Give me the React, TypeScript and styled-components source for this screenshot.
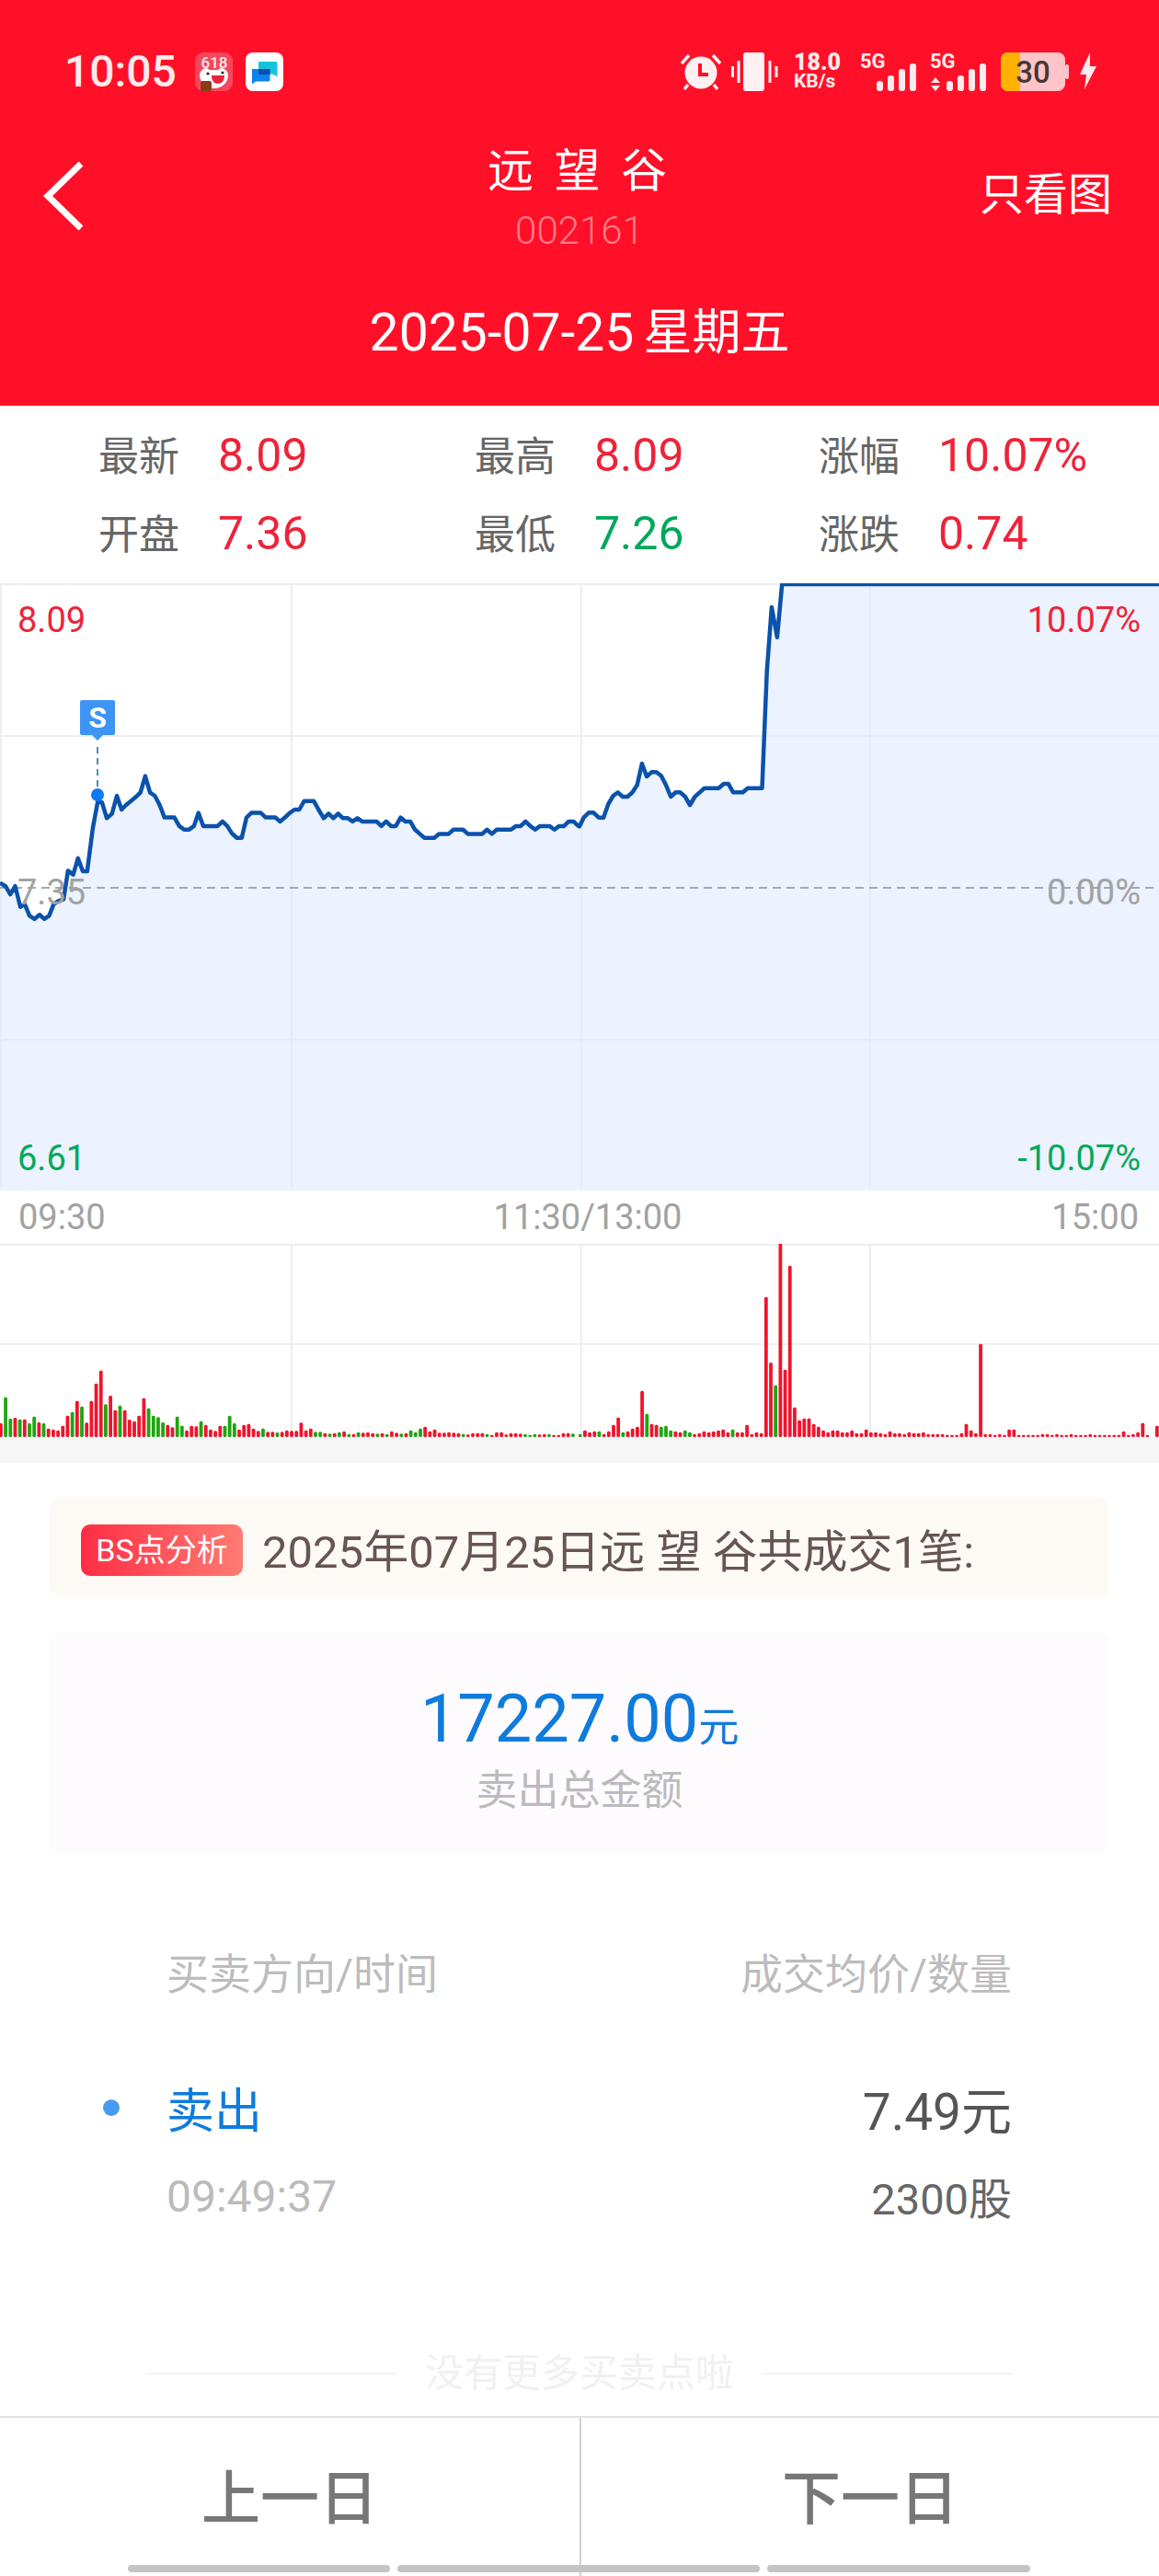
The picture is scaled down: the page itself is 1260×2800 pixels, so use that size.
import styled, { createGlobalStyle } from "styled-components";

const RED = "#ee2339";
const GREEN = "#00a85a";
const BLUE = "#0f7bdc";

// price line, read off the reference: [x, y] in chart pixels
const morning = [
  [0, 1455], [15, 1465], [28, 1490], [41, 1465], [55, 1528], [67, 1520], [80, 1555], [93, 1565], [107, 1552], [120, 1565],
  [133, 1555], [145, 1520], [158, 1510], [172, 1505], [184, 1418], [198, 1430], [211, 1380], [224, 1420], [236, 1420], [251, 1290],
  [264, 1210], [276, 1210], [289, 1258], [303, 1245], [316, 1190], [329, 1232], [341, 1218], [355, 1205], [368, 1193], [380, 1180],
  [393, 1130], [406, 1180], [419, 1190], [432, 1218], [445, 1256], [458, 1256], [472, 1256], [485, 1282], [498, 1293], [511, 1293],
  [525, 1282], [537, 1242], [550, 1282], [563, 1282], [576, 1282], [589, 1282], [602, 1268], [615, 1282], [628, 1305], [641, 1318],
  [654, 1318], [667, 1256], [680, 1242], [693, 1242], [706, 1242], [719, 1256], [732, 1256], [745, 1256], [758, 1268], [771, 1256],
  [784, 1242], [797, 1232], [810, 1232], [823, 1206], [836, 1206], [849, 1206], [862, 1232], [876, 1258], [889, 1244], [902, 1258],
  [915, 1244], [928, 1258], [941, 1258], [954, 1268], [967, 1258], [980, 1268], [993, 1268], [1006, 1268], [1019, 1268], [1032, 1282],
  [1045, 1268], [1058, 1282], [1071, 1282], [1084, 1256], [1097, 1268], [1110, 1268], [1123, 1293], [1136, 1306], [1149, 1318], [1162, 1318],
  [1175, 1318], [1188, 1306], [1201, 1306], [1214, 1306], [1227, 1293], [1240, 1293], [1253, 1293], [1266, 1306], [1279, 1306], [1292, 1306],
  [1305, 1306], [1318, 1293], [1331, 1306], [1344, 1293], [1357, 1293], [1370, 1293], [1383, 1293], [1396, 1282], [1409, 1282], [1422, 1268],
  [1435, 1282], [1448, 1293], [1461, 1282], [1474, 1282], [1487, 1282], [1500, 1293], [1513, 1282], [1526, 1282], [1539, 1268], [1552, 1268],
  [1565, 1282],
].map(([x, y]) => [x / 2.489, 440 + y / 2.8 - 634]);

const afternoon = [
  [0, 835], [12, 805], [25, 790], [38, 790], [52, 806], [65, 806], [78, 762], [91, 735], [104, 724], [117, 738],
  [130, 738], [143, 724], [156, 700], [169, 630], [182, 672], [195, 658], [208, 658], [221, 670], [234, 700], [247, 738],
  [260, 724], [273, 724], [286, 738], [299, 765], [312, 738], [325, 724], [338, 710], [351, 710], [364, 710], [377, 710],
  [390, 696], [403, 696], [416, 724], [429, 724], [442, 724], [455, 710], [468, 710], [481, 710], [494, 710], [507, 330],
  [520, 120], [535, 218], [548, 45], [1568, 45],
].map(([x, y]) => [630 + x / 2.489, 620 + y / 3 - 634]);

const pricePoints = [...morning, ...afternoon];
const priceLine = pricePoints.map(([x, y]) => `${x.toFixed(1)},${y.toFixed(1)}`).join(" ");
const priceArea = `0,660 ${priceLine} 1260,660`;

// volume bars: bar top in reference units, negative = green
const volumeAm = [
  770, -685, -755, 752, -757, 757, -770, -748, 767, -770, 787, 790, 793, 778, 745, -733, 697, -715, 768, 697,
  640, 598, -708, 680, 727, -712, 727, 758, 763, 745, 688, -721, -745, -750, -767, 775, 783, -748, -778, 793,
  778, 780, -763, 775, 790, 795, 778, -778, -745, -770, 790, 775, 772, 787, 795, -787, 798, 798, -800, 798,
  793, 795, 795, 768, 793, 787, -798, -798, 802, -804, 802, -799, 796, -805, 805, -799, 801, 799, 802, -804,
  802, -805, 796, 801, -804, 802, -793, -799, -787, 781, 796, 790, 801, 801, 799, 801, 802, -805, 807, 802,
  802, 802, -805, 808, 799, 799, 807, 802, 802, 804, -805, -808, -805, 807, 805, -805, 808, 808, 802, 802, -804,
];
const volumePm = [
  -805, 793, 799, 796, -796, 805, 796, 775, 751, -799, 796, 787, 781, 664, -739, 772, 775, -781, -778, -793,
  796, 799, -793, -799, 805, 802, 796, 799, 796, 793, 790, 799, -790, 799, 799, 775, 805, 799, 802, 358,
  572, -646, 181, 595, 256, 718, 760, 754, 754, 772, 781, 793, 799, 793, 793, 799, 799, 793, 802, 802,
  790, 799, 799, 802, 805, 796, 802, 802, 805, 799, 802, 802, 799, 805, 805, 805, 805, 808, 808, 808,
  802, 772, 793, 802, 511, 805, 805, 808, 805, 808, 790, 790, 808, 808, 808, 808, 808, 805, 805, 808, 805,
  808, 808, 805, 808, 808, 808, 805, 808, 808, 808, 808, 808, 808, 796, 808, 805, 799, 769, 808, 815, 778,
];

const GlobalStyle = createGlobalStyle`
  html, body {
    margin: 0;
    padding: 0;
    background: #ffffff;
  }
  * {
    box-sizing: border-box;
  }
`;

const Screen = styled.div`
  position: relative;
  display: flex;
  flex-direction: column;
  width: 1260px;
  height: 2800px;
  overflow: hidden;
  background: #ffffff;
  font-family: Roboto, "Noto Sans CJK SC", sans-serif;
`;

const Header = styled.header`
  display: flex;
  flex-direction: column;
  height: 441px;
  padding-top: 57px;
  background: #ff1028;
  color: #ffffff;
`;

const StatusBar = styled.div`
  display: flex;
  align-items: center;
  height: 42px;
  padding: 0 60px 0 70px;
  color: #fdeaec;
`;

const Clock = styled.span`
  width: 142px;
  font-size: 48px;
  font-weight: 500;
  line-height: 42px;
`;

const StatusApps = styled.div`
  display: flex;
  gap: 14px;
  margin-right: auto;
`;

const StatusIcons = styled.div`
  display: flex;
  flex: none;
  align-items: flex-start;
  width: 460px;
  height: 42px;
`;

const IconGap = styled.span<{ $size: number }>`
  flex: none;
  width: ${(p) => p.$size}px;
`;

const Speed = styled.div`
  display: flex;
  flex: none;
  flex-direction: column;
  width: 72px;
  margin-left: 17px;
  font-weight: 700;
  line-height: 21px;
  b {
    font-size: 25px;
  }
  small {
    font-size: 21px;
  }
`;

const Signal = styled.div`
  position: relative;
  flex: none;
  width: 66px;
  height: 42px;
  svg {
    display: block;
  }
`;

const SignalTag = styled.span`
  position: absolute;
  top: 0;
  left: 0;
  font-size: 22px;
  font-weight: 700;
  line-height: 20px;
`;

const NavRow = styled.div`
  display: grid;
  grid-template-columns: 1fr 360px 1fr;
  margin-top: 58px;
`;

const BackButton = styled.button`
  align-self: start;
  width: 60px;
  height: 80px;
  margin: 15px 0 0 46px;
  padding: 0;
  border: 0;
  background: none;
`;

const TitleBlock = styled.div`
  display: flex;
  flex-direction: column;
  align-items: center;
`;

const StockName = styled.div`
  font-size: 50px;
  line-height: 58px;
  letter-spacing: 5px;
`;

const StockCode = styled.div`
  margin-top: 11px;
  font-size: 42px;
  font-weight: 300;
  line-height: 50px;
  color: #ff7e89;
`;

const ViewOnly = styled.div`
  justify-self: end;
  margin: 25px 51px 0 0;
  font-size: 48px;
  line-height: 60px;
`;

const DateLine = styled.div`
  display: flex;
  justify-content: center;
  gap: 10px;
  margin-top: 56px;
  font-size: 57px;
  line-height: 60px;
  span {
    font-size: 53px;
  }
`;

const Stats = styled.section`
  display: grid;
  grid-template-columns: 409px 374px 1fr;
  grid-auto-rows: 85px;
  height: 193px;
  padding: 11px 0 0 107px;
`;

const Stat = styled.div`
  display: flex;
  align-items: center;
`;

const StatLabel = styled.span`
  width: 130px;
  margin-bottom: 4px;
  font-size: 44px;
  color: #666666;
`;

const StatValue = styled.span<{ $tone: string }>`
  font-size: 50px;
  color: ${(p) => p.$tone};
`;

const PriceChart = styled.section`
  position: relative;
  height: 660px;
  svg {
    display: block;
  }
`;

const ChartLabel = styled.span<{ $tone: string; $y: number; $right?: boolean }>`
  position: absolute;
  top: ${(p) => p.$y}px;
  ${(p) => (p.$right ? "right: 20px;" : "left: 19px;")}
  font-size: 38px;
  line-height: 42px;
  color: ${(p) => p.$tone};
`;

const TradeMark = styled.span`
  position: absolute;
  top: 127px;
  left: 87px;
  width: 38px;
  height: 38px;
  border-radius: 2px;
  background: #3d94f5;
  color: #ffffff;
  font-size: 32px;
  font-weight: 700;
  line-height: 38px;
  text-align: center;
  &::after {
    content: "";
    position: absolute;
    left: 13px;
    top: 38px;
    border: 6px solid transparent;
    border-top-color: #3d94f5;
    border-bottom: 0;
  }
`;

const TimeAxis = styled.div`
  display: flex;
  justify-content: space-between;
  align-items: center;
  height: 58px;
  padding: 0 22px 0 20px;
  font-size: 38px;
  color: #a2a2a2;
`;

const MiddleTime = styled.span`
  margin-left: 20px;
`;

const VolumeChart = styled.svg`
  display: block;
  flex: none;
`;

const Band = styled.div`
  flex: none;
  height: 28px;
  background: #f6f6f6;
`;

const Content = styled.main`
  display: flex;
  flex: 1;
  flex-direction: column;
  padding: 38px 54px 0;
`;

const Banner = styled.div`
  display: flex;
  align-items: center;
  gap: 21px;
  height: 108px;
  padding-left: 34px;
  border-radius: 12px;
  background: #fdfaf6;
  color: #665550;
  font-size: 49px;
`;

const Badge = styled.span`
  width: 176px;
  height: 56px;
  margin-top: 5px;
  border-radius: 10px;
  background: linear-gradient(90deg, #ff2d44, #ff7b73);
  color: #ffffff;
  font-size: 34px;
  line-height: 56px;
  text-align: center;
`;

const Summary = styled.div`
  display: flex;
  flex-direction: column;
  align-items: center;
  height: 239px;
  margin-top: 39px;
  padding-top: 49px;
  border-radius: 12px;
  background: #fdfbfe;
`;

const Amount = styled.div`
  font-size: 72px;
  line-height: 90px;
  color: ${BLUE};
  small {
    font-size: 44px;
  }
`;

const SummaryLabel = styled.div`
  margin-top: -4px;
  font-size: 45px;
  line-height: 56px;
  color: #bcbabc;
`;

const ListHeader = styled.div`
  display: flex;
  justify-content: space-between;
  margin-top: 102px;
  padding: 0 106px 0 127px;
  font-size: 46px;
  line-height: 60px;
  color: #bcbcbc;
`;

const TradeRow = styled.div`
  position: relative;
  display: grid;
  grid-template-columns: 1fr auto;
  grid-auto-rows: 97px;
  align-items: center;
  margin-top: 66px;
  padding: 0 106px 0 127px;
  &::before {
    content: "";
    position: absolute;
    left: 58px;
    top: 40px;
    width: 18px;
    height: 18px;
    border-radius: 50%;
    background: #4a9af0;
  }
`;

const Side = styled.span`
  font-size: 52px;
  color: ${BLUE};
`;

const TradeTime = styled.span`
  font-size: 48px;
  color: #bbbbbb;
`;

const TradePrice = styled.span`
  justify-self: end;
  font-size: 55px;
  color: #555555;
`;

const TradeShares = styled.span`
  justify-self: end;
  margin-bottom: 3px;
  font-size: 47px;
  color: #666666;
`;

const EndNote = styled.div`
  display: flex;
  align-items: center;
  gap: 30px;
  margin-top: auto;
  margin-bottom: 21px;
  padding: 0 104px;
  font-size: 42px;
  line-height: 50px;
  color: #f3eff2;
  &::before,
  &::after {
    content: "";
    flex: 1;
    height: 2px;
    background: #f5f2f4;
  }
`;

const Footer = styled.footer`
  display: grid;
  grid-template-columns: 1fr 1fr;
  flex: none;
  height: 174px;
  border-top: 2px solid #e2e2e2;
`;

const DayButton = styled.button`
  height: 100%;
  padding: 0 0 8px;
  border: 0;
  background: none;
  color: #777777;
  font-family: inherit;
  font-size: 64px;
  font-weight: 500;
  & + & {
    border-left: 2px solid #d2d2d2;
  }
`;

const GestureBar = styled.div`
  position: absolute;
  left: 139px;
  bottom: 4px;
  display: flex;
  gap: 8px;
  width: 981px;
  height: 8px;
`;

const GestureSegment = styled.span<{ $grow: number }>`
  flex: ${(p) => p.$grow};
  border-radius: 4px;
  background: #c4c4c4;
`;

const PromoIcon = () => (
  <svg width="41" height="42" viewBox="0 0 41 42">
    <rect width="41" height="42" rx="9" fill="#f5475c" />
    <text x="21" y="17" textAnchor="middle" fontSize="17" fontWeight="500" fontFamily="Roboto" fill="#ffeeea">618</text>
    <path d="M5 25c0-5 4-8 8-8l3 2h9l3-2c4 0 8 3 8 8 0 8-7 14-15 14S5 33 5 25z" fill="#ffffff" />
    <path d="M18 25h14c0 6-3 9-7 9s-7-3-7-9z" fill="#e8243a" />
    <circle cx="14" cy="23" r="1.600" fill="#222222" />
    <circle cx="30" cy="22" r="1.600" fill="#222222" />
    <rect x="6" y="31" width="12" height="11" rx="2" fill="#8a3d14" />
  </svg>
);

const ChatIcon = () => (
  <svg width="41" height="42" viewBox="0 0 41 42">
    <rect width="41" height="42" rx="8" fill="#ffffff" />
    <path d="M14 10h19a1.500 1.500 0 0 1 1.500 1.500v15l-5-3H14z" fill="#14c4dc" />
    <path d="M7 18h18a1.500 1.500 0 0 1 1.500 1.500V30a1.500 1.500 0 0 1-1.500 1.500H11l-4 3z" fill="#0a84f0" />
    <path d="M14 18h12.500v6H14z" fill="#0a4fb0" />
  </svg>
);

const AlarmIcon = () => (
  <svg width="45" height="42" viewBox="0 0 45 42">
    <circle cx="22" cy="22" r="17.500" fill="#fff0f2" />
    <path d="M1 12 9 3M35 3l8 9M8 35l-4 5M36 35l4 5" stroke="#fff0f2" strokeWidth="3.500" />
    <path d="M21 12v12h9" fill="none" stroke="#ff1028" strokeWidth="4" />
  </svg>
);

const VibrateIcon = () => (
  <svg width="51" height="42" viewBox="0 0 51 42">
    <rect x="13" width="23" height="42" rx="3" fill="#fff0f2" />
    <path d="M1.500 15v12M8 9v24M42 9v24M49 15v12" stroke="#fff0f2" strokeWidth="3" />
  </svg>
);

// 5G tag plus bars; the second SIM also shows the up/down arrows
const SignalIcon = ({ arrows }: { arrows?: boolean }) => (
  <Signal>
    <svg width="66" height="42" viewBox="0 0 66 42" fill="#fdeaec">
      {arrows && <path d="M6 27l5 6H1zM6 42l5-6H1z" />}
      <rect x="18" y="31" width="7" height="11" rx="3" />
      <rect x="30" y="25" width="7" height="17" rx="3" />
      <rect x="42" y="18" width="7" height="24" rx="3" />
      <rect x="54" y="12" width="7" height="30" rx="3" />
    </svg>
    <SignalTag>5G</SignalTag>
  </Signal>
);

const BatteryIcon = () => (
  <svg width="74" height="42" viewBox="0 0 74 42">
    <rect x="70" y="13" width="4" height="16" rx="2" fill="#ffc4c8" />
    <rect width="70" height="42" rx="8" fill="#ffc4c8" />
    <path d="M8 0h13v42H8a8 8 0 0 1-8-8V8a8 8 0 0 1 8-8z" fill="#ffb300" />
    <text x="35" y="33" textAnchor="middle" fontSize="33" fontWeight="500" fontFamily="Roboto" fill="#443833">30</text>
  </svg>
);

const BoltIcon = () => (
  <svg width="18" height="40" viewBox="0 0 18 40">
    <path d="M11 0 0 24h7L5 40 18 15h-7z" fill="#fdeaec" />
  </svg>
);

const BackIcon = () => (
  <svg width="60" height="80" viewBox="0 0 60 80">
    <path d="M42 6 6 41l36 35" fill="none" stroke="#ffffff" strokeWidth="7" />
  </svg>
);

const PricePlot = () => (
  <svg width="1260" height="660" viewBox="0 0 1260 660">
    <rect x="0" y="0" width="1260" height="2" fill="#eeeeee" />
    <rect x="0" y="0" width="2" height="660" fill="#eeeeee" />
    {[316, 631, 945].map((x) => (
      <rect key={x} x={x} y="0" width="2" height="660" fill="#eeeeee" />
    ))}
    {[165, 495].map((y) => (
      <rect key={y} x="0" y={y} width="1260" height="2" fill="#eeeeee" />
    ))}
    <polygon points={priceArea} fill="#dfe9fd" fillOpacity="0.6" />
    <line x1="0" y1="331" x2="1260" y2="331" stroke="#a5a8b0" strokeWidth="2" strokeDasharray="9 6" />
    <polyline points={priceLine} fill="none" stroke="#0a52ab" strokeWidth="4.500" strokeLinejoin="round" />
    <line x1="106" y1="178" x2="106" y2="225" stroke="#4a8fb8" strokeWidth="2" strokeDasharray="7 5" />
    <circle cx="106" cy="230" r="7" fill="#0a7af5" />
  </svg>
);

const VolumePlot = () => (
  <VolumeChart width="1260" height="210" viewBox="0 0 1260 210">
    <rect x="0" y="0" width="1260" height="2" fill="#eeeeee" />
    <rect x="0" y="108" width="1260" height="2" fill="#eeeeee" />
    {[316, 631, 945].map((x) => (
      <rect key={x} x={x} y="0" width="2" height="210" fill="#eeeeee" />
    ))}
    {[
      { bars: volumeAm, start: 0.8 },
      { bars: volumePm, start: 630.6 },
    ].map(({ bars, start }) =>
      bars.map((v, i) => {
        const h = (815 - Math.abs(v)) / 3;
        return (
          <rect
            key={`${start}-${i}`}
            x={start + i * 5.183 - 1.8}
            y={210 - h}
            width="3.800"
            height={h}
            rx="1.500"
            fill={v < 0 ? "#1fa510" : "#f0142c"}
          />
        );
      })
    )}
  </VolumeChart>
);

const App = () => {
  return (
    <Screen>
      <GlobalStyle />
      <Header>
        <StatusBar>
          <Clock>10:05</Clock>
          <StatusApps>
            <PromoIcon />
            <ChatIcon />
          </StatusApps>
          <StatusIcons>
            <AlarmIcon />
            <IconGap $size={10} />
            <VibrateIcon />
            <Speed>
              <b>18.0</b>
              <small>KB/s</small>
            </Speed>
            <SignalIcon />
            <IconGap $size={10} />
            <SignalIcon arrows />
            <IconGap $size={11} />
            <BatteryIcon />
            <IconGap $size={12} />
            <BoltIcon />
          </StatusIcons>
        </StatusBar>
        <NavRow>
          <BackButton>
            <BackIcon />
          </BackButton>
          <TitleBlock>
            <StockName>远 望 谷</StockName>
            <StockCode>002161</StockCode>
          </TitleBlock>
          <ViewOnly>只看图</ViewOnly>
        </NavRow>
        <DateLine>
          2025-07-25<span>星期五</span>
        </DateLine>
      </Header>

      <Stats>
        <Stat>
          <StatLabel>最新</StatLabel>
          <StatValue $tone={RED}>8.09</StatValue>
        </Stat>
        <Stat>
          <StatLabel>最高</StatLabel>
          <StatValue $tone={RED}>8.09</StatValue>
        </Stat>
        <Stat>
          <StatLabel>涨幅</StatLabel>
          <StatValue $tone={RED}>10.07%</StatValue>
        </Stat>
        <Stat>
          <StatLabel>开盘</StatLabel>
          <StatValue $tone={RED}>7.36</StatValue>
        </Stat>
        <Stat>
          <StatLabel>最低</StatLabel>
          <StatValue $tone={GREEN}>7.26</StatValue>
        </Stat>
        <Stat>
          <StatLabel>涨跌</StatLabel>
          <StatValue $tone={RED}>0.74</StatValue>
        </Stat>
      </Stats>

      <PriceChart>
        <PricePlot />
        <ChartLabel $tone={RED} $y={19}>8.09</ChartLabel>
        <ChartLabel $tone="#a2a2a2" $y={315}>7.35</ChartLabel>
        <ChartLabel $tone={GREEN} $y={604}>6.61</ChartLabel>
        <ChartLabel $tone={RED} $y={19} $right>10.07%</ChartLabel>
        <ChartLabel $tone="#a2a2a2" $y={315} $right>0.00%</ChartLabel>
        <ChartLabel $tone={GREEN} $y={604} $right>-10.07%</ChartLabel>
        <TradeMark>S</TradeMark>
      </PriceChart>

      <TimeAxis>
        <span>09:30</span>
        <MiddleTime>11:30/13:00</MiddleTime>
        <span>15:00</span>
      </TimeAxis>
      <VolumePlot />
      <Band />

      <Content>
        <Banner>
          <Badge>BS点分析</Badge>
          2025年07月25日远 望 谷共成交1笔:
        </Banner>
        <Summary>
          <Amount>
            17227.00<small>元</small>
          </Amount>
          <SummaryLabel>卖出总金额</SummaryLabel>
        </Summary>
        <ListHeader>
          <span>买卖方向/时间</span>
          <span>成交均价/数量</span>
        </ListHeader>
        <TradeRow>
          <Side>卖出</Side>
          <TradePrice>7.49元</TradePrice>
          <TradeTime>09:49:37</TradeTime>
          <TradeShares>2300股</TradeShares>
        </TradeRow>
        <EndNote>没有更多买卖点啦</EndNote>
      </Content>

      <Footer>
        <DayButton>上一日</DayButton>
        <DayButton>下一日</DayButton>
      </Footer>
      <GestureBar>
        <GestureSegment $grow={285} />
        <GestureSegment $grow={395} />
        <GestureSegment $grow={286} />
      </GestureBar>
    </Screen>
  );
};

export default App;
